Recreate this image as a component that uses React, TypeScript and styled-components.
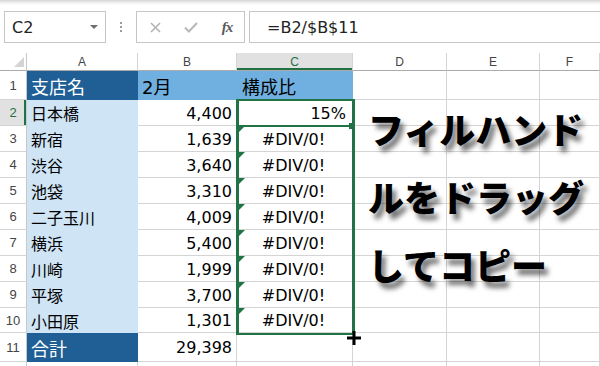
import React from "react";
import styled, { createGlobalStyle } from "styled-components";

const GREEN = "#217346";
const GRID = "#d4d4d4";
const DARK_BLUE = "#1f5f95";
const MID_BLUE = "#6fb0e0";
const PALE_BLUE = "#cfe4f5";

const GlobalStyle = createGlobalStyle`
  html, body {
    margin: 0;
    padding: 0;
    background: #fff;
    overflow: hidden;
  }
  body {
    font-family: "DejaVu Sans", "Noto Sans CJK JP", sans-serif;
  }
`;

const Page = styled.div`
  position: relative;
  width: 600px;
  height: 366px;
  overflow: hidden;
  background: #fff;
`;

/* ---------- formula bar ---------- */

const FormulaBar = styled.div`
  height: 53px;
  box-sizing: border-box;
  padding: 11px 0 10px 4px;
  display: flex;
  background: linear-gradient(#d6d6d6 0, #f2f2f2 3px, #fff 5px);
`;

const Box = styled.div`
  box-sizing: border-box;
  border: 1px solid #c6c6c6;
  background: #fff;
  display: flex;
  align-items: center;
`;

const NameBox = styled(Box)`
  width: 102px;
  padding: 0 7px 0 7px;
  font-size: 16px;
  color: #222;
`;

const DropArrow = styled.span`
  margin-left: auto;
  width: 0;
  height: 0;
  border-left: 4px solid transparent;
  border-right: 4px solid transparent;
  border-top: 4px solid #6d6d6d;
`;

const Grip = styled.div`
  width: 30px;
  display: flex;
  flex-direction: column;
  align-items: center;
  justify-content: center;
  gap: 2px;
  span {
    width: 2px;
    height: 2px;
    background: #9c9c9c;
  }
`;

const ButtonGroup = styled(Box)`
  width: 109px;
  display: grid;
  grid-template-columns: 36px 36px 36px;
  justify-items: center;
`;

const Fx = styled.span`
  font-family: "Liberation Serif", serif;
  font-style: italic;
  font-weight: bold;
  font-size: 15px;
  color: #5a5a5a;
  letter-spacing: -1px;
`;

const FormulaInput = styled(Box)`
  flex: 1;
  margin-left: 4px;
  margin-right: -10px;
  padding-left: 17px;
  font-size: 16px;
  color: #222;
`;

/* ---------- sheet ---------- */

const Sheet = styled.div`
  display: grid;
  grid-template-columns: 27px 111px 99px 116px 94px 93px 60px;
  grid-template-rows: 18px 29px repeat(8, 26px) 25px 29px 26px;
`;

const Corner = styled.div`
  position: relative;
  box-sizing: border-box;
  border-right: 1px solid #c8c8c8;
  border-bottom: 1px solid #ababab;
  &::after {
    content: "";
    position: absolute;
    right: 2px;
    bottom: 3px;
    border-left: 10px solid transparent;
    border-bottom: 10px solid #d4d4d4;
  }
`;

const ColHead = styled.div<{ $active?: boolean }>`
  box-sizing: border-box;
  display: flex;
  align-items: center;
  justify-content: center;
  font-family: "Liberation Sans", sans-serif;
  font-size: 12px;
  color: ${(p) => (p.$active ? GREEN : "#444")};
  background: ${(p) => (p.$active ? "#e1e1e1" : "#fff")};
  border-right: 1px solid ${GRID};
  border-bottom: 1px solid #ababab;
  box-shadow: ${(p) => (p.$active ? `inset 0 -2px 0 ${GREEN}` : "none")};
`;

const RowHead = styled.div<{ $active?: boolean }>`
  box-sizing: border-box;
  display: flex;
  align-items: center;
  justify-content: center;
  font-family: "Liberation Sans", sans-serif;
  font-size: 13px;
  color: ${(p) => (p.$active ? GREEN : "#444")};
  background: ${(p) => (p.$active ? "#e1e1e1" : "#fff")};
  border-right: 1px solid #c8c8c8;
  border-bottom: 1px solid ${GRID};
  box-shadow: ${(p) => (p.$active ? `inset -2px 0 0 ${GREEN}` : "none")};
`;

const Cell = styled.div<{
  $bg?: string;
  $fg?: string;
  $align?: "left" | "right" | "center";
  $size?: number;
  $flag?: boolean;
}>`
  position: relative;
  box-sizing: border-box;
  display: flex;
  align-items: center;
  justify-content: ${(p) =>
    p.$align === "right" ? "flex-end" : p.$align === "center" ? "center" : "flex-start"};
  padding: 1px 4px 0 4px;
  background: ${(p) => p.$bg ?? "#fff"};
  border-right: 1px solid ${(p) => p.$bg ?? GRID};
  border-bottom: 1px solid ${(p) => p.$bg ?? GRID};
  color: ${(p) => p.$fg ?? "#000"};
  font-size: ${(p) => p.$size ?? 16}px;
  white-space: nowrap;
  &::before {
    content: "";
    display: ${(p) => (p.$flag ? "block" : "none")};
    position: absolute;
    left: 2px;
    top: 0;
    border-top: 6px solid ${GREEN};
    border-right: 6px solid transparent;
  }
`;

/* ---------- overlays ---------- */

const Selection = styled.div`
  position: absolute;
  left: 236px;
  top: 99px;
  width: 119px;
  height: 236px;
  box-sizing: border-box;
  border: 2px solid ${GREEN};
  border-left-width: 3px;
  border-right-width: 3px;
  pointer-events: none;
`;

const ActiveEdge = styled.div`
  position: absolute;
  left: 237px;
  top: 125px;
  width: 117px;
  height: 2px;
  background: ${GREEN};
`;

const FillHandle = styled.div`
  position: absolute;
  left: 349px;
  top: 123px;
  width: 5px;
  height: 6px;
  background: ${GREEN};
`;

const Cursor = styled.svg`
  position: absolute;
  left: 347px;
  top: 331px;
`;

const Caption = styled.div`
  position: absolute;
  left: 368px;
  top: 94px;
  font-family: "Noto Sans CJK JP", sans-serif;
  font-weight: 900;
  font-size: 36px;
  line-height: 68px;
  color: #000;
  text-shadow: 4px 6px 5px rgba(0, 0, 0, 0.55);
  white-space: nowrap;
`;

type Row = { a: string; b: string; c: string };

const branches: Row[] = [
  { a: "日本橋", b: "4,400", c: "15%" },
  { a: "新宿", b: "1,639", c: "#DIV/0!" },
  { a: "渋谷", b: "3,640", c: "#DIV/0!" },
  { a: "池袋", b: "3,310", c: "#DIV/0!" },
  { a: "二子玉川", b: "4,009", c: "#DIV/0!" },
  { a: "横浜", b: "5,400", c: "#DIV/0!" },
  { a: "川崎", b: "1,999", c: "#DIV/0!" },
  { a: "平塚", b: "3,700", c: "#DIV/0!" },
  { a: "小田原", b: "1,301", c: "#DIV/0!" },
];

const columns = ["A", "B", "C", "D", "E", "F"];

const Blanks = ({ n }: { n: number }) => (
  <>
    {Array.from({ length: n }).map((_, i) => (
      <Cell key={i} />
    ))}
  </>
);

const App = () => {
  return (
    <Page>
      <GlobalStyle />
      <FormulaBar>
        <NameBox>
          C2
          <DropArrow />
        </NameBox>
        <Grip>
          <span />
          <span />
          <span />
        </Grip>
        <ButtonGroup>
          <svg width="11" height="11" viewBox="0 0 11 11">
            <path d="M1 1L10 10M10 1L1 10" stroke="#b3b3b3" strokeWidth="1.6" />
          </svg>
          <svg width="14" height="11" viewBox="0 0 14 11">
            <path d="M1 5.5L4.8 9.5L13 1" stroke="#b8b8b8" strokeWidth="2" fill="none" />
          </svg>
          <Fx>fx</Fx>
        </ButtonGroup>
        <FormulaInput>=B2/$B$11</FormulaInput>
      </FormulaBar>

      <Sheet>
        <Corner />
        {columns.map((c) => (
          <ColHead key={c} $active={c === "C"}>
            {c}
          </ColHead>
        ))}

        <RowHead>1</RowHead>
        <Cell $bg={DARK_BLUE} $fg="#fff" $size={18}>
          支店名
        </Cell>
        <Cell $bg={MID_BLUE} $size={18}>
          2月
        </Cell>
        <Cell $bg={MID_BLUE} $size={18} style={{ paddingLeft: 5 }}>
          構成比
        </Cell>
        <Blanks n={3} />

        {branches.map((r, i) => (
          <React.Fragment key={r.a}>
            <RowHead $active={i === 0}>{i + 2}</RowHead>
            <Cell $bg={PALE_BLUE}>{r.a}</Cell>
            <Cell $align="right">{r.b}</Cell>
            <Cell $align={i === 0 ? "right" : "center"} $flag={i > 0} style={{ paddingRight: 6 }}>
              {r.c}
            </Cell>
            <Blanks n={3} />
          </React.Fragment>
        ))}

        <RowHead>11</RowHead>
        <Cell $bg={DARK_BLUE} $fg="#fff" $size={18}>
          合計
        </Cell>
        <Cell $align="right">29,398</Cell>
        <Blanks n={4} />

        <RowHead />
        <Blanks n={6} />
      </Sheet>

      <Selection />
      <ActiveEdge />
      <FillHandle />
      <Cursor width="14" height="14" viewBox="0 0 14 14">
        <path d="M7 0V14M0 7H14" stroke="#000" strokeWidth="3" />
      </Cursor>

      <Caption>
        フィルハンド
        <br />
        ルをドラッグ
        <br />
        してコピー
      </Caption>
    </Page>
  );
};

export default App;
